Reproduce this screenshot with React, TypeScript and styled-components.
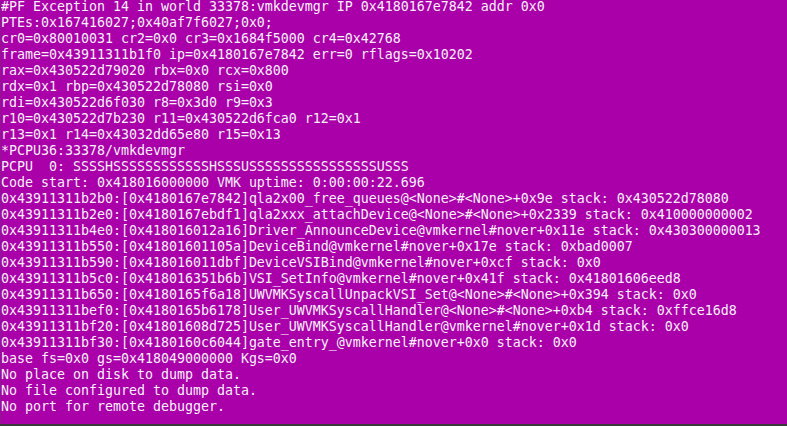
import React from "react";
import styled, { createGlobalStyle } from "styled-components";

const GlobalStyle = createGlobalStyle`
  html, body {
    margin: 0;
    padding: 0;
    background: #3a3a3a;
    overflow: hidden;
  }
`;

const Console = styled.div({
  width: "787px",
  height: "426px",
  display: "flex",
  flexDirection: "column",
});

const Screen = styled.div({
  flex: 1,
  background: "#aa00aa",
  overflow: "hidden",
  borderLeft: "1px solid #8a1a8a",
});

const Log = styled.div({
  marginTop: "-1px",
  display: "flex",
  flexDirection: "column",
  fontFamily: '"DejaVu Sans Mono", "Liberation Mono", monospace',
  fontSize: "13.29px",
  lineHeight: "16px",
  color: "#f8f0f8",
  whiteSpace: "pre",
});

const Line = styled.div({
  height: "16px",
});

const BottomEdge = styled.div({
  height: "2px",
  background: "#3a3a3a",
});

const lines: string[] = [
  "#PF Exception 14 in world 33378:vmkdevmgr IP 0x4180167e7842 addr 0x0",
  "PTEs:0x167416027;0x40af7f6027;0x0;",
  "cr0=0x80010031 cr2=0x0 cr3=0x1684f5000 cr4=0x42768",
  "frame=0x43911311b1f0 ip=0x4180167e7842 err=0 rflags=0x10202",
  "rax=0x430522d79020 rbx=0x0 rcx=0x800",
  "rdx=0x1 rbp=0x430522d78080 rsi=0x0",
  "rdi=0x430522d6f030 r8=0x3d0 r9=0x3",
  "r10=0x430522d7b230 r11=0x430522d6fca0 r12=0x1",
  "r13=0x1 r14=0x43032dd65e80 r15=0x13",
  "*PCPU36:33378/vmkdevmgr",
  "PCPU  0: SSSSHSSSSSSSSSSSSHSSSUSSSSSSSSSSSSSSSSUSSS",
  "Code start: 0x418016000000 VMK uptime: 0:00:00:22.696",
  "0x43911311b2b0:[0x4180167e7842]qla2x00_free_queues@<None>#<None>+0x9e stack: 0x430522d78080",
  "0x43911311b2e0:[0x4180167ebdf1]qla2xxx_attachDevice@<None>#<None>+0x2339 stack: 0x410000000002",
  "0x43911311b4e0:[0x418016012a16]Driver_AnnounceDevice@vmkernel#nover+0x11e stack: 0x430300000013",
  "0x43911311b550:[0x41801601105a]DeviceBind@vmkernel#nover+0x17e stack: 0xbad0007",
  "0x43911311b590:[0x418016011dbf]DeviceVSIBind@vmkernel#nover+0xcf stack: 0x0",
  "0x43911311b5c0:[0x418016351b6b]VSI_SetInfo@vmkernel#nover+0x41f stack: 0x41801606eed8",
  "0x43911311b650:[0x4180165f6a18]UWVMKSyscallUnpackVSI_Set@<None>#<None>+0x394 stack: 0x0",
  "0x43911311bef0:[0x4180165b6178]User_UWVMKSyscallHandler@<None>#<None>+0xb4 stack: 0xffce16d8",
  "0x43911311bf20:[0x41801608d725]User_UWVMKSyscallHandler@vmkernel#nover+0x1d stack: 0x0",
  "0x43911311bf30:[0x4180160c6044]gate_entry_@vmkernel#nover+0x0 stack: 0x0",
  "base fs=0x0 gs=0x418049000000 Kgs=0x0",
  "No place on disk to dump data.",
  "No file configured to dump data.",
  "No port for remote debugger.",
];

const App = () => {
  return (
    <>
      <GlobalStyle />
      <Console>
        <Screen>
          <Log>
            {lines.map((text, i) => (
              <Line key={i}>{text}</Line>
            ))}
          </Log>
        </Screen>
        <BottomEdge />
      </Console>
    </>
  );
};

export default App;
